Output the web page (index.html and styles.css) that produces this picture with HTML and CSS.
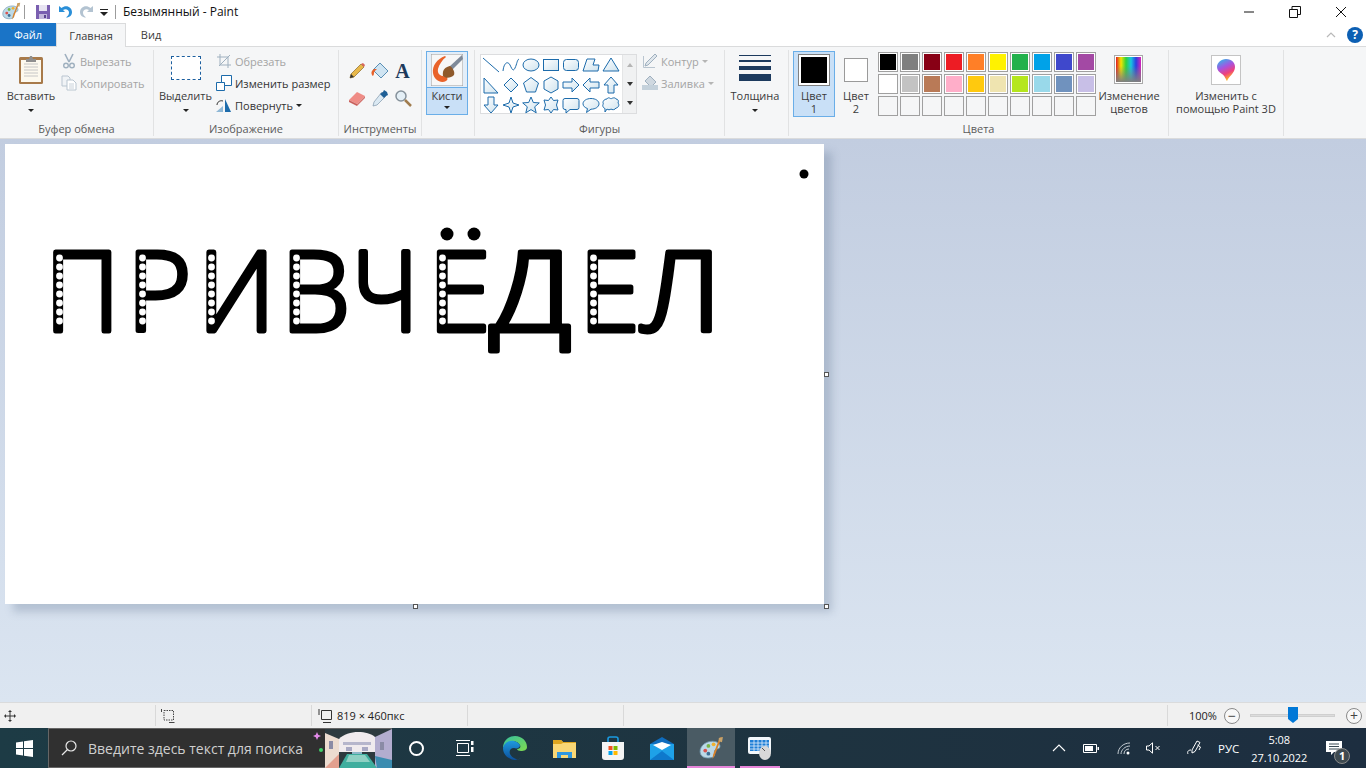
FILE: index.html
```html
<!DOCTYPE html>
<html lang="ru">
<head>
    <meta charset="utf-8">
    <title>Безымянный - Paint</title>
    <link rel="stylesheet" href="styles.css">
</head>
<body>
<svg class="defs" width="0" height="0">
    <defs>
        <linearGradient id="shapeFill" x1="0" y1="0" x2="1" y2="1">
            <stop offset="0" stop-color="#ffffff"/>
            <stop offset="1" stop-color="#cfe3ee"/>
        </linearGradient>
        <linearGradient id="edgeA" x1="0" y1="0" x2="1" y2="1">
            <stop offset="0" stop-color="#35c1a0"/>
            <stop offset="1" stop-color="#7fd94e"/>
        </linearGradient>
        <linearGradient id="edgeB" x1="0" y1="0" x2="0" y2="1">
            <stop offset="0" stop-color="#1e9ade"/>
            <stop offset="1" stop-color="#0c4f9c"/>
        </linearGradient>
        <linearGradient id="rainbow" x1="0" y1="0" x2="1" y2="0">
            <stop offset="0" stop-color="#e01b24"/>
            <stop offset=".2" stop-color="#f5e400"/>
            <stop offset=".4" stop-color="#2fd13a"/>
            <stop offset=".6" stop-color="#16c7e0"/>
            <stop offset=".8" stop-color="#2b3fe0"/>
            <stop offset="1" stop-color="#d822b8"/>
        </linearGradient>
        <linearGradient id="greyFade" x1="0" y1="0" x2="0" y2="1">
            <stop offset=".35" stop-color="#808080" stop-opacity="0"/>
            <stop offset="1" stop-color="#808080"/>
        </linearGradient>
        <linearGradient id="drop3d" x1="0" y1="0" x2="0.4" y2="1">
            <stop offset="0" stop-color="#1fc6ea"/>
            <stop offset=".45" stop-color="#a653e0"/>
            <stop offset=".75" stop-color="#f0407a"/>
            <stop offset="1" stop-color="#fbb02c"/>
        </linearGradient>
        <symbol id="palette" viewBox="0 0 24 24">
            <path d="M1 15c0-6 6-10 12-10 5 0 8 3 7 6-1 2-4 1-5 3s1 4-1 6c-3 2-13 2-13-5z" fill="#bcd9e8" stroke="#6d94ab" stroke-width=".8"/>
            <circle cx="6" cy="14" r="1.8" fill="#d9534f"/>
            <circle cx="9" cy="9.5" r="1.8" fill="#7ab648"/>
            <circle cx="14" cy="8" r="1.8" fill="#f0b030"/>
            <circle cx="9" cy="17" r="1.8" fill="#3f6f96"/>
            <path d="M22 1l-2 5-5 13-2 3 .5-4 5-13 1-3z" fill="#d9822b"/>
            <path d="M19 2l4-1-1 5-3-1z" fill="#c9a36a"/>
        </symbol>
    </defs>
</svg>

<div class="app">
    <header class="titlebar">
        <svg class="app-icon" width="19" height="19"><use href="#palette"/></svg>
        <span class="qat-sep"></span>
        <svg class="qat-icon" width="16" height="16" viewBox="0 0 16 16"><path d="M1 1h14v14H1z" fill="#7a5fb0"/><path d="M4 1h8v6H4z" fill="#e8e4f2"/><path d="M4 10h8v5H4z" fill="#c3b8dc"/><path d="M9 11h2v3H9z" fill="#5a4490"/></svg>
        <svg class="qat-icon" width="16" height="16" viewBox="0 0 16 16"><path d="M2 2v6h6L6 6c3-2 6 0 6 2.500 0 2-1 3.500-3 5 4 0 6-2.500 6-5.500C15 3 9 0 4.500 4z" fill="#2a8fd8"/></svg>
        <svg class="qat-icon" width="16" height="16" viewBox="0 0 16 16"><path d="M14 2v6H8l2-2C7 4 4 6 4 8.500c0 2 1 3.500 3 5-4 0-6-2.500-6-5.500C1 3 7 0 11.500 4z" fill="#b3c3d1"/></svg>
        <svg class="qat-more" width="8" height="8" viewBox="0 0 8 8"><path d="M0 0h8v1H0zM0 3h8L4 7z" fill="#222"/></svg>
        <span class="qat-sep"></span>
        <span class="title-text">Безымянный - Paint</span>
        <div class="win-controls">
            <svg width="12" height="12" viewBox="0 0 12 12"><path d="M1 6h10" stroke="#111"/></svg>
            <svg width="12" height="12" viewBox="0 0 12 12"><path d="M.5 3.500h8v8h-8zM3 3.500V.5h8.500v8H8.500" fill="none" stroke="#111"/></svg>
            <svg width="12" height="12" viewBox="0 0 12 12"><path d="M1 1l10 10M11 1L1 11" stroke="#111"/></svg>
        </div>
    </header>

    <nav class="tabs">
        <span class="tab tab-file">Файл</span>
        <span class="tab tab-home">Главная</span>
        <span class="tab tab-view">Вид</span>
        <div class="tabs-right">
            <svg width="10" height="6" viewBox="0 0 10 6"><path d="M1 5l4-4 4 4" fill="none" stroke="#b9b9b9" stroke-width="1.200"/></svg>
            <span class="help">?</span>
        </div>
    </nav>

    <section class="ribbon">
        <div class="group group-clipboard">
            <div class="group-body">
                <div class="big-btn paste">
                    <svg width="30" height="30" viewBox="0 0 30 30"><rect x="3" y="3" width="24" height="27" rx="1.500" fill="#a87a4a"/><rect x="5" y="6" width="20" height="22" fill="#fdf9ee"/><path d="M8 10h14M8 13h14M8 16h14M8 19h14M8 22h14" stroke="#c6c6c6"/><path d="M10 5h3l1-3h2l1 3h3v3H10z" fill="#8f8f8f"/></svg>
                    <span class="big-label">Вставить</span>
                    <span class="arrow"></span>
                </div>
                <div class="small-list">
                    <div class="small-row off">
                        <svg width="16" height="16" viewBox="0 0 16 16"><path d="M4 1l4 8M12 1L8 9" stroke="#9fb0bf" stroke-width="1.600"/><circle cx="5" cy="12.500" r="2.300" fill="none" stroke="#9fb0bf" stroke-width="1.400"/><circle cx="11" cy="12.500" r="2.300" fill="none" stroke="#9fb0bf" stroke-width="1.400"/></svg>
                        Вырезать
                    </div>
                    <div class="small-row off">
                        <svg width="16" height="16" viewBox="0 0 16 16"><path d="M1 1h6l2 2v8H1z" fill="#f0f3f6" stroke="#b9c5d0"/><path d="M6 5h6l3 3v7H6z" fill="#fff" stroke="#b9c5d0"/><path d="M8 9h5M8 11h5M8 13h5" stroke="#c9d2da"/></svg>
                        Копировать
                    </div>
                </div>
            </div>
            <div class="group-label">Буфер обмена</div>
        </div>

        <div class="group group-image">
            <div class="group-body">
                <div class="big-btn select">
                    <span class="marquee"></span>
                    <span class="big-label">Выделить</span>
                    <span class="arrow"></span>
                </div>
                <div class="small-list">
                    <div class="small-row off">
                        <svg width="16" height="16" viewBox="0 0 16 16"><path d="M1 4h11v11M4 1v11h11M3 13L14 2" fill="none" stroke="#9fb0bf"/></svg>
                        Обрезать
                    </div>
                    <div class="small-row">
                        <svg width="16" height="16" viewBox="0 0 16 16"><path d="M.5 7.500h8v8h-8z" fill="#fff" stroke="#1c6bab"/><path d="M5.500.5h10v10H8.500V7.500h-3z" fill="#fff" stroke="#1c6bab"/></svg>
                        Изменить размер
                    </div>
                    <div class="small-row">
                        <svg width="16" height="16" viewBox="0 0 16 16"><path d="M9 2l6 13H9z" fill="#1c6bab"/><path d="M0 15l7-6v6z" fill="#8fb8d6"/><path d="M1 8c0-3 3-5 6-4" fill="none" stroke="#333"/></svg>
                        Повернуть <span class="arrow inline"></span>
                    </div>
                </div>
            </div>
            <div class="group-label">Изображение</div>
        </div>

        <div class="group group-tools">
            <div class="group-body tools-grid">
                <svg width="18" height="18" viewBox="0 0 18 18"><path d="M2 16l1-4L13 2l3 3L6 15z" fill="#e8b84a" stroke="#8a6a2a" stroke-width=".7"/><path d="M13 2l3 3 1-2-2-2z" fill="#d9675c"/><path d="M2 16l1-4 3 3z" fill="#333"/></svg>
                <svg width="20" height="20" viewBox="0 0 20 20"><path d="M10 2l8 8-7 7-8-8z" fill="#cfe4f2" stroke="#5a8fb5"/><path d="M4 8c-3 2-3 4-2 6s2 0 2-2 2-3 3-4z" fill="#e8622a"/></svg>
                <span class="tool-a">A</span>
                <svg width="18" height="18" viewBox="0 0 18 18"><path d="M1 11l8-8 8 4-8 8z" fill="#ef8c86"/><path d="M1 11l8 4v2l-8-4z" fill="#c9605c"/><path d="M9 15l8-8v2l-8 8z" fill="#d4736e"/></svg>
                <svg width="18" height="18" viewBox="0 0 18 18"><path d="M11 3l4 4-9 9-4 1 1-4z" fill="#dbe9f3" stroke="#7f97aa" stroke-width=".7"/><path d="M9 5l4 4 2-2 2-1-1-3-3-2-1 2z" fill="#1e5f96"/></svg>
                <svg width="18" height="18" viewBox="0 0 18 18"><circle cx="7" cy="7" r="5" fill="#e4eff6" stroke="#85919b" stroke-width="1.500"/><path d="M11 11l6 6" stroke="#a07c4e" stroke-width="2.500"/></svg>
            </div>
            <div class="group-label">Инструменты</div>
        </div>

        <div class="group group-brushes">
            <div class="brush-btn">
                <div class="brush-top">
                    <svg width="32" height="32" viewBox="0 0 32 32"><rect width="32" height="32" fill="#f7f7f7" stroke="#9a9a9a"/><path d="M31 1L18 13l3 3L32 5z" fill="#7f8a99"/><path d="M14 2C6 5 1 12 2 19c1 7 8 11 13 8 2-1 2-3 0-5-5 1-9-2-8-7 1-4 4-9 8-12z" fill="#e9632a"/><path d="M19 12c-5 1-8 4-7 10 3 3 8 2 11-1 1-3-1-7-4-9z" fill="#8f5a2c"/></svg>
                </div>
                <div class="brush-bottom">
                    <span class="big-label">Кисти</span>
                    <span class="arrow"></span>
                </div>
            </div>
        </div>

        <div class="group group-shapes">
            <div class="group-body shapes-body">
                <div class="gallery">
                    <div class="shape-grid">
                        <svg viewBox="0 0 18 18"><path d="M1 2l16 14"/></svg>
                        <svg viewBox="0 0 18 18"><path class="open" d="M1 15C2 6 6 5 8 9s3 7 5 3 2-8 4-9"/></svg>
                        <svg viewBox="0 0 18 18"><ellipse cx="9" cy="9" rx="8" ry="6"/></svg>
                        <svg viewBox="0 0 18 18"><rect x="1.500" y="3.500" width="15" height="11"/></svg>
                        <svg viewBox="0 0 18 18"><rect x="1.500" y="3.500" width="15" height="11" rx="3"/></svg>
                        <svg viewBox="0 0 18 18"><path d="M1 15L5 3h8l-2 6h6l-1 6z"/></svg>
                        <svg viewBox="0 0 18 18"><path d="M9 2l8 13H1z"/></svg>
                        <svg viewBox="0 0 18 18"><path d="M2 2l14 15H2z"/></svg>
                        <svg viewBox="0 0 18 18"><path d="M9 2l7 7-7 7-7-7z"/></svg>
                        <svg viewBox="0 0 18 18"><path d="M9 1.500l7.500 5.500-3 9h-9l-3-9z"/></svg>
                        <svg viewBox="0 0 18 18"><path d="M9 1l7 4v8l-7 4-7-4V5z"/></svg>
                        <svg viewBox="0 0 18 18"><path d="M1 6h9V2l7 7-7 7v-4H1z"/></svg>
                        <svg viewBox="0 0 18 18"><path d="M17 6H8V2L1 9l7 7v-4h9z"/></svg>
                        <svg viewBox="0 0 18 18"><path d="M6 17V9H2l7-8 7 8h-4v8z"/></svg>
                        <svg viewBox="0 0 18 18"><path d="M6 1v8H2l7 8 7-8h-4V1z"/></svg>
                        <svg viewBox="0 0 18 18"><path d="M9 1l2 6 6 2-6 2-2 6-2-6-6-2 6-2z"/></svg>
                        <svg viewBox="0 0 18 18"><path d="M9 1l2.300 5.500 6 .4-4.600 3.900 1.500 6L9 13.600 3.800 16.800l1.500-6L.7 6.900l6-.4z"/></svg>
                        <svg viewBox="0 0 18 18"><path d="M9 1l2.500 3.500L16 4l-1.500 5 1.500 5-4.500-.5L9 17l-2.500-3.500L2 14l1.500-5L2 4l4.500.5z"/></svg>
                        <svg viewBox="0 0 18 18"><path d="M3 2.500h12a2 2 0 0 1 2 2v7a2 2 0 0 1-2 2H8l-4 3.500v-3.500H3a2 2 0 0 1-2-2v-7a2 2 0 0 1 2-2z"/></svg>
                        <svg viewBox="0 0 18 18"><path d="M9 2.500c4.500 0 8 2.300 8 5.300s-3.500 5.400-8 5.400l-4.500 3.300 1-3.900C3 11.700 1 10 1 7.800c0-3 3.500-5.300 8-5.300z"/></svg>
                        <svg viewBox="0 0 18 18"><path d="M5 3c1-2 3-1 4 0 1-1 4-2 5 0 2 0 3 2 2 4 2 2 0 5-2 5-1 2-4 2-5 1-1 1-3 1-4 0l-2 3v-3.500C1 12 0 9 1.500 8 0 6 2 3 5 3z"/></svg>
                    </div>
                    <div class="gallery-scroll">
                        <span class="scroll-btn"><i class="tri up"></i></span>
                        <span class="scroll-btn"><i class="tri down"></i></span>
                        <span class="scroll-btn"><i class="tri more"></i></span>
                    </div>
                </div>
                <div class="small-list outline-list">
                    <div class="small-row off">
                        <svg width="16" height="16" viewBox="0 0 16 16"><path d="M1.500 3v11.500H13" fill="none" stroke="#b9c5d0"/><path d="M3 13l1-3 9-9 2 2-9 9z" fill="#dfe6ec" stroke="#9fb0bf"/></svg>
                        Контур <span class="arrow inline off"></span>
                    </div>
                    <div class="small-row off">
                        <svg width="16" height="16" viewBox="0 0 16 16"><path d="M8 1l6 6-5 5-6-6z" fill="#cfd8e0" stroke="#9fb0bf"/><path d="M0 10h16v5H0z" fill="#c4d1db"/></svg>
                        Заливка <span class="arrow inline off"></span>
                    </div>
                </div>
            </div>
            <div class="group-label">Фигуры</div>
        </div>

        <div class="group group-size">
            <div class="big-btn size-btn">
                <div class="size-lines"><i></i><i></i><i></i><i></i></div>
                <span class="big-label">Толщина</span>
                <span class="arrow"></span>
            </div>
        </div>

        <div class="group group-colors">
            <div class="group-body colors-body">
                <div class="color-btn active">
                    <span class="swatch-big"><i></i></span>
                    <span class="color-text">Цвет<br>1</span>
                </div>
                <div class="color-btn">
                    <span class="swatch-small"><i></i></span>
                    <span class="color-text">Цвет<br>2</span>
                </div>
                <div class="palette">
                    <i style="--c:#000000"></i><i style="--c:#7f7f7f"></i><i style="--c:#880015"></i><i style="--c:#ed1c24"></i><i style="--c:#ff7f27"></i><i style="--c:#fff200"></i><i style="--c:#22b14c"></i><i style="--c:#00a2e8"></i><i style="--c:#3f48cc"></i><i style="--c:#a349a4"></i>
                    <i style="--c:#ffffff"></i><i style="--c:#c3c3c3"></i><i style="--c:#b97a57"></i><i style="--c:#ffaec9"></i><i style="--c:#ffc90e"></i><i style="--c:#efe4b0"></i><i style="--c:#b5e61d"></i><i style="--c:#99d9ea"></i><i style="--c:#7092be"></i><i style="--c:#c8bfe7"></i>
                    <i class="empty"></i><i class="empty"></i><i class="empty"></i><i class="empty"></i><i class="empty"></i><i class="empty"></i><i class="empty"></i><i class="empty"></i><i class="empty"></i><i class="empty"></i>
                </div>
                <div class="big-btn edit-colors">
                    <svg width="30" height="30" viewBox="0 0 30 30"><rect x=".5" y=".5" width="28" height="28" fill="#fff" stroke="#a9a9a9"/><rect x="2" y="2" width="25" height="25" fill="url(#rainbow)"/><rect x="2" y="2" width="25" height="25" fill="url(#greyFade)"/></svg>
                    <span class="color-text">Изменение<br>цветов</span>
                </div>
            </div>
            <div class="group-label">Цвета</div>
        </div>

        <div class="group group-3d">
            <div class="big-btn edit-3d">
                <svg width="30" height="30" viewBox="0 0 30 30"><rect x=".5" y=".5" width="29" height="29" fill="#fff" stroke="#c4c4c4"/><path d="M15 4c6 0 9 4 9 8 0 6-6 9-8 14-1-1-2-5-5-7-3-2-5-4-5-7 0-4 4-8 9-8z" fill="url(#drop3d)"/></svg>
                <span class="color-text">Изменить с<br>помощью Paint 3D</span>
            </div>
        </div>
    </section>

    <main class="workspace">
        <div class="canvas">
            <svg class="drawing" width="819" height="460" viewBox="0 0 819 460">
                <g class="word"><text transform="translate(40 186.500) scale(.95 1)">П</text><text transform="translate(122 186.500) scale(1 1)">Р</text><text transform="translate(193 186.500) scale(.97 1)">И</text><text transform="translate(276 186.500) scale(1 1)">В</text><text transform="translate(347 186.500) scale(.9 1)">Ч</text><text transform="translate(423 186.500) scale(1.03 1)">Ё</text><text transform="translate(485 186.500) scale(1.14 1)">Д</text><text transform="translate(574 186.500) scale(1 1)">Е</text><text transform="translate(636 186.500) scale(1.07 1)">Л</text></g>
                <rect x="425" y="72" width="60" height="30" fill="#fff"/>
                <circle cx="442" cy="90" r="6.500"/>
                <circle cx="469" cy="90" r="6.500"/>
                <g fill="#fff">
                    <circle cx="54.500" cy="114" r="3.400"/><circle cx="54.500" cy="123" r="3.400"/><circle cx="54.500" cy="132" r="3.400"/><circle cx="54.500" cy="141" r="3.400"/><circle cx="54.500" cy="150" r="3.400"/><circle cx="54.500" cy="159" r="3.400"/><circle cx="54.500" cy="168" r="3.400"/><circle cx="54.500" cy="177" r="3.400"/>
                    <circle cx="137.500" cy="114" r="3.400"/><circle cx="137.500" cy="123" r="3.400"/><circle cx="137.500" cy="132" r="3.400"/><circle cx="137.500" cy="141" r="3.400"/><circle cx="137.500" cy="150" r="3.400"/><circle cx="137.500" cy="159" r="3.400"/><circle cx="137.500" cy="168" r="3.400"/><circle cx="137.500" cy="177" r="3.400"/>
                    <circle cx="206.500" cy="114" r="3.400"/><circle cx="206.500" cy="123" r="3.400"/><circle cx="206.500" cy="132" r="3.400"/><circle cx="206.500" cy="141" r="3.400"/><circle cx="206.500" cy="150" r="3.400"/><circle cx="206.500" cy="159" r="3.400"/><circle cx="206.500" cy="168" r="3.400"/><circle cx="206.500" cy="177" r="3.400"/>
                    <circle cx="291.500" cy="114" r="3.400"/><circle cx="291.500" cy="123" r="3.400"/><circle cx="291.500" cy="132" r="3.400"/><circle cx="291.500" cy="141" r="3.400"/><circle cx="291.500" cy="150" r="3.400"/><circle cx="291.500" cy="159" r="3.400"/><circle cx="291.500" cy="168" r="3.400"/><circle cx="291.500" cy="177" r="3.400"/>
                    <circle cx="437.500" cy="114" r="3.400"/><circle cx="437.500" cy="123" r="3.400"/><circle cx="437.500" cy="132" r="3.400"/><circle cx="437.500" cy="141" r="3.400"/><circle cx="437.500" cy="150" r="3.400"/><circle cx="437.500" cy="159" r="3.400"/><circle cx="437.500" cy="168" r="3.400"/><circle cx="437.500" cy="177" r="3.400"/>
                    <circle cx="588.500" cy="114" r="3.400"/><circle cx="588.500" cy="123" r="3.400"/><circle cx="588.500" cy="132" r="3.400"/><circle cx="588.500" cy="141" r="3.400"/><circle cx="588.500" cy="150" r="3.400"/><circle cx="588.500" cy="159" r="3.400"/><circle cx="588.500" cy="168" r="3.400"/><circle cx="588.500" cy="177" r="3.400"/>
                </g>
                <circle cx="799" cy="30" r="4.500"/>
            </svg>
            <span class="handle h-right"></span>
            <span class="handle h-bottom"></span>
            <span class="handle h-corner"></span>
        </div>
    </main>

    <footer class="statusbar">
        <div class="status-cell">
            <svg width="12" height="12" viewBox="0 0 12 12"><path d="M6 0l2 2H6.500v3.500H10V4l2 2-2 2V6.500H6.500V10H8l-2 2-2-2h1.500V6.500H2V8L0 6l2-2v1.500h3.500V2H4z" fill="#333"/></svg>
        </div>
        <div class="status-cell">
            <svg width="14" height="14" viewBox="0 0 14 14"><path d="M3 1.500h9.500V11H3z" fill="none" stroke="#444" stroke-dasharray="1.500 1"/><path d="M.5 3V0M13.500 13.500H8" stroke="#444"/></svg>
        </div>
        <div class="status-cell">
            <svg width="14" height="14" viewBox="0 0 14 14"><path d="M3.500 1.500h10v9h-10z" fill="none" stroke="#333"/><path d="M1 0v6M5 13.500h8" stroke="#333"/></svg>
            <span>819 × 460пкс</span>
        </div>
        <div class="status-cell"></div>
        <div class="status-cell status-wide"></div>
        <div class="zoom-cell">
            <span class="zoom-text">100%</span>
            <span class="zoom-btn">−</span>
            <div class="slider"><i class="thumb"></i></div>
            <span class="zoom-btn">+</span>
        </div>
    </footer>

    <div class="taskbar">
        <div class="start">
            <svg width="17" height="17" viewBox="0 0 17 17"><path d="M0 2.500l7-1v6.500H0zM8 1.300L17 0v8H8zM0 9h7v6.500l-7-1zM8 9h9v8l-9-1.300z" fill="#fff"/></svg>
        </div>
        <div class="search">
            <svg width="16" height="16" viewBox="0 0 16 16"><circle cx="10" cy="6" r="5" fill="none" stroke="#e8e8e8" stroke-width="1.200"/><path d="M6.500 9.500L1 15" stroke="#e8e8e8" stroke-width="1.200"/></svg>
            <span class="search-text">Введите здесь текст для поиска</span>
            <span class="spark spark-pink"></span>
            <span class="spark spark-blue"></span>
            <span class="spark spark-green"></span>
            <svg class="bridge" width="67" height="39" viewBox="0 0 67 39"><rect width="67" height="39" fill="#2d3a3f"/><path d="M0 4L14 10v29H0z" fill="#ecdcd0"/><path d="M67 0L50 8v31h17z" fill="#b3adcf"/><path d="M14 10C22 1 42 1 50 8v15H14z" fill="#f0ebee"/><path d="M18 13h28v3H18z" fill="#b6b6cc"/><path d="M21 18h6v4h-6zM37 18h6v4h-6z" fill="#a9a9c4"/><path d="M27 23h10v2H27z" fill="#8db7c9"/><path d="M14 39l8-14h20l10 14z" fill="#3fae9e"/><path d="M24 26h16l5 7H21z" fill="#8fd0c3"/><path d="M0 39l14-14v14z" fill="#e2a08f"/><path d="M52 39l-2-12 17 4v8z" fill="#3b8cb0"/><path d="M4 12h4v8H4zM55 13h4v8h-4z" fill="#8a8ba5"/></svg>
        </div>
        <div class="task-btn">
            <span class="cortana"></span>
        </div>
        <div class="task-btn">
            <svg width="18" height="16" viewBox="0 0 18 16"><path d="M1.500 3.500h11v9h-11zM0 .5h14M0 15.500h14" fill="none" stroke="#fff"/><path d="M15 1h2.500v4H15zM15 7h2.500v5H15z" fill="#fff"/></svg>
        </div>
        <div class="task-btn pin-first">
            <svg width="24" height="24" viewBox="0 0 24 24"><path d="M12 0c7 0 12 5 12 11 0 3-3 4-6 4-2 0-4-1-4-2 3 0 4-2 3-4C15 5 9 4 5 7 3 8 1 10 0 12 0 5 5 0 12 0z" fill="url(#edgeA)"/><path d="M0 12c1-5 6-8 11-7 4 1 6 3 6 5-1 2-3 3-6 2-4 0-5 3-4 6 1 2 3 4 6 5 2 1 4 0 5-1-3 2-8 3-12 0-4-2-6-6-6-10z" fill="url(#edgeB)"/></svg>
        </div>
        <div class="task-btn">
            <svg width="23" height="19" viewBox="0 0 23 19"><path d="M0 1h8l2 2h13v16H0z" fill="#f9d775"/><path d="M0 1h8l2 2h13v1H10L8 5H0z" fill="#dda520"/><path d="M4 19v-6h15v6h-4v-3H8v3z" fill="#2f97e0"/></svg>
        </div>
        <div class="task-btn">
            <svg width="24" height="24" viewBox="0 0 24 24"><path d="M7 7V3a2 2 0 0 1 2-2h6a2 2 0 0 1 2 2v4" fill="none" stroke="#1a9ae0" stroke-width="1.600"/><path d="M1 6h22v15a3 3 0 0 1-3 3H4a3 3 0 0 1-3-3z" fill="#f4f4f4"/><path d="M7.500 10h4v4h-4z" fill="#f25022"/><path d="M12.500 10h4v4h-4z" fill="#7fba00"/><path d="M7.500 15h4v4h-4z" fill="#00a4ef"/><path d="M12.500 15h4v4h-4z" fill="#ffb900"/></svg>
        </div>
        <div class="task-btn">
            <svg width="24" height="23" viewBox="0 0 24 23"><path d="M0 7L12 0l12 7v2H0z" fill="#0f6cbd"/><path d="M0 7h24v16H0z" fill="#1ea1e8"/><path d="M3 8l9-3 9 3-9 5z" fill="#fff"/><path d="M0 23l12-9 12 9z" fill="#0e79cc"/></svg>
        </div>
        <div class="task-btn running active">
            <svg width="25" height="25"><use href="#palette"/></svg>
        </div>
        <div class="task-btn running">
            <svg width="24" height="23" viewBox="0 0 24 23"><rect width="23" height="17" rx="2" fill="#f2f7fb"/><rect x="2" y="3" width="19" height="11" fill="#1e7fd6"/><path d="M2 6h19M2 9h19M2 12h19M6 3v11M10 3v11M14 3v11M18 3v11" stroke="#e3f0fb" stroke-width=".8"/><ellipse cx="17" cy="16" rx="6" ry="7" fill="#d8d8d8"/><path d="M14 11l3 3" stroke="#555"/></svg>
        </div>
        <div class="tray">
            <svg width="14" height="8" viewBox="0 0 14 8"><path d="M1 7l6-6 6 6" fill="none" stroke="#fff" stroke-width="1.100"/></svg>
            <svg class="t-battery" width="16" height="9" viewBox="0 0 16 9"><path d="M.5.5h13v8H.5z" fill="none" stroke="#fff"/><path d="M2 2h8v5H2z" fill="#fff"/><path d="M14.500 3H16v3h-1.500z" fill="#fff"/></svg>
            <svg class="t-wifi" width="14" height="13" viewBox="0 0 14 13"><path d="M1 12C1 6 6 1 13 1M4 12c0-4 4-8 9-8M7 12c0-3 2-5 5-5" fill="none" stroke="#c4ccd2" stroke-width="1"/><circle cx="11" cy="11" r="1.500" fill="#fff"/></svg>
            <svg class="t-sound" width="15" height="12" viewBox="0 0 15 12"><path d="M.5 4h2.500L6.500 .8v10.400L3 8H.5z" fill="none" stroke="#fff"/><path d="M9.500 4l4 4M13.500 4l-4 4" stroke="#fff"/></svg>
            <svg class="t-pen" width="16" height="16" viewBox="0 0 16 16"><path d="M6 10l5-9 3 1.500-5 9-3 1.500zM11.500 5l3 2-1.500 3M5 10c-3 0-4 2-3 4" fill="none" stroke="#fff"/></svg>
            <span class="t-lang">РУС</span>
            <div class="t-clock"><span>5:08</span><span>27.10.2022</span></div>
            <div class="t-notify">
                <svg width="16" height="15" viewBox="0 0 16 15"><path d="M0 0h16v11H8l-3 3v-3H0z" fill="#fff"/><path d="M3 3h10M3 5.500h10M3 8h10" stroke="#3a4a54"/></svg>
                <span class="t-badge">1</span>
            </div>
        </div>
    </div>
</div>
</body>
</html>
```
FILE: styles.css
```css
* {
    box-sizing: border-box;
}
html, body {
    margin: 0;
    height: 100%;
    overflow: hidden;
}
body {
    font-family: "Open Sans", "Noto Sans", sans-serif;
    font-size: 11px;
    color: #3b3b3b;
}
.defs {
    position: absolute;
}
.app {
    display: flex;
    flex-direction: column;
    width: 1366px;
    height: 768px;
}

/* title bar */
.titlebar {
    display: flex;
    align-items: center;
    height: 23px;
    background: #fff;
    padding-left: 2px;
}
.app-icon {
    margin-right: 3px;
}
.qat-sep {
    width: 1px;
    height: 14px;
    background: #9c9c9c;
}
.qat-icon {
    margin-left: 10px;
    margin-right: -4px;
}
.qat-more {
    margin: 3px 7px 0 9px;
}
.title-text {
    margin-left: 7px;
    font-size: 12px;
    color: #111;
}
.win-controls {
    margin-left: auto;
    display: flex;
    gap: 34px;
    padding-right: 19px;
}

/* tabs */
.tabs {
    display: flex;
    height: 23px;
    background: #fff;
    align-items: flex-end;
}
.tab {
    height: 23px;
    display: flex;
    align-items: center;
    justify-content: center;
}
.tab-file {
    width: 56px;
    background: #1a74c7;
    color: #fff;
}
.tab-home {
    width: 70px;
    background: #f5f6f7;
    border: 1px solid #dadbdc;
    border-bottom: 0;
    margin-bottom: -1px;
    height: 24px;
    position: relative;
    z-index: 1;
}
.tab-view {
    width: 50px;
}
.tabs-right {
    margin-left: auto;
    display: flex;
    align-items: center;
    gap: 11px;
    height: 23px;
    padding-right: 3px;
}
.help {
    width: 16px;
    height: 16px;
    border-radius: 50%;
    background: #0c5fb3;
    color: #fff;
    font-weight: 700;
    font-size: 12px;
    line-height: 16px;
    text-align: center;
}

/* ribbon */
.ribbon {
    display: flex;
    height: 93px;
    background: #f5f6f7;
    border-top: 1px solid #dadbdc;
    border-bottom: 1px solid #dadbdc;
    padding-bottom: 1px;
}
.group {
    display: flex;
    flex-direction: column;
    border-right: 1px solid #e1e2e3;
    margin-top: 3px;
    margin-bottom: 1px;
}
.group-body {
    flex: 1;
    display: flex;
    margin-top: -1px;
}
.group-label {
    height: 14px;
    line-height: 14px;
    text-align: center;
    color: #5c5c5c;
}
.group-clipboard { width: 154px; }
.group-image { width: 185px; }
.group-tools { width: 83px; }
.group-brushes { width: 53px; }
.group-shapes { width: 250px; }
.group-size { width: 64px; }
.group-colors { width: 380px; }
.group-3d { width: 115px; }

.big-btn {
    display: flex;
    flex-direction: column;
    align-items: center;
    text-align: center;
}
.big-label {
    margin-top: 3px;
    line-height: 16px;
    white-space: nowrap;
}
.arrow {
    width: 0;
    height: 0;
    margin-top: 5px;
    border: 3px solid transparent;
    border-top: 3px solid #222;
    border-bottom: 0;
}
.arrow.inline {
    display: inline-block;
    margin: 0 0 2px 1px;
    vertical-align: middle;
}
.arrow.off {
    border-top-color: #b5b5b5;
    margin-left: 3px;
}
.small-list {
    display: flex;
    flex-direction: column;
    padding-top: 1px;
}
.small-row {
    display: flex;
    align-items: center;
    gap: 3px;
    height: 22px;
    white-space: nowrap;
    color: #333;
}
.small-row.off {
    color: #a4a4a4;
}
.small-row .arrow.inline {
    margin-left: 0;
    margin-bottom: 0;
}

.paste {
    width: 46px;
    margin: 5px 7px 0 8px;
}
.paste .big-label {
    margin-top: 4px;
}
.select {
    width: 51px;
    margin: 7px 5px 0 6px;
}
.marquee {
    display: block;
    width: 30px;
    height: 24px;
    margin-bottom: 5px;
    border: 1px dashed #1c5f9f;
    background: #fff;
}
.tools-grid {
    display: grid;
    grid-template-columns: repeat(3, 23px);
    grid-template-rows: 27px 27px;
    justify-items: center;
    align-items: center;
    align-content: start;
    padding: 8px 0 0 6px;
}
.tool-a {
    font-family: "Liberation Serif", serif;
    font-weight: 700;
    font-size: 20px;
    line-height: 20px;
    color: #1d3a5c;
}

/* brushes */
.brush-btn {
    width: 42px;
    height: 64px;
    margin: 1px 0 0 4px;
    border: 1px solid #6aaee8;
    display: flex;
    flex-direction: column;
}
.brush-top {
    height: 36px;
    padding: 2px 0 0 4px;
    background: #e3eef9;
    border-bottom: 1px solid #6aaee8;
}
.brush-bottom {
    flex: 1;
    background: #c9e0f7;
    display: flex;
    flex-direction: column;
    align-items: center;
}
.brush-bottom .big-label {
    margin-top: 0;
}
.brush-bottom .arrow {
    margin-top: 2px;
}

/* shapes */
.shapes-body {
    padding: 5px 0 0 5px;
}
.gallery {
    display: flex;
    height: 60px;
    border: 1px solid #dcdddf;
    background: #fff;
}
.shape-grid {
    display: grid;
    grid-template-columns: repeat(7, 20px);
    grid-template-rows: repeat(3, 20px);
    width: 141px;
    place-items: center;
}
.shape-grid svg {
    width: 18px;
    height: 18px;
    fill: url(#shapeFill);
    stroke: #1c6bab;
    stroke-width: 1;
}
.shape-grid .open {
    fill: none;
}
.gallery-scroll {
    width: 14px;
    display: flex;
    flex-direction: column;
    background: #f0f1f2;
    border-left: 1px solid #e4e5e6;
}
.scroll-btn {
    flex: 1;
    display: flex;
    align-items: center;
    justify-content: center;
}
.tri {
    display: block;
    width: 0;
    height: 0;
    border: 3.500px solid transparent;
}
.tri.up {
    border-bottom: 4px solid #b5b5b5;
    border-top: 0;
}
.tri.down {
    border-top: 4px solid #333;
    border-bottom: 0;
}
.tri.more {
    border-top: 4px solid #333;
    border-bottom: 0;
    box-shadow: 0 -3px 0 -2px #333;
}
.outline-list {
    margin: -4px 0 0 5px;
    padding-top: 0;
}

/* size */
.size-btn {
    width: 60px;
    padding-top: 5px;
}
.size-lines {
    width: 32px;
    display: flex;
    flex-direction: column;
    gap: 4px;
    margin-bottom: 4px;
}
.size-lines i {
    display: block;
    background: #1c3a5e;
    height: 1px;
}
.size-lines i:nth-child(2) { height: 2px; }
.size-lines i:nth-child(3) { height: 4px; }
.size-lines i:nth-child(4) { height: 7px; }

/* colours */
.colors-body {
    padding: 2px 0 0 4px;
}
.color-btn {
    width: 42px;
    height: 66px;
    display: flex;
    flex-direction: column;
    align-items: center;
    border: 1px solid transparent;
}
.color-btn.active {
    background: #c9e0f7;
    border-color: #6aaee8;
}
.color-text {
    line-height: 13px;
    text-align: center;
    white-space: nowrap;
}
.swatch-big {
    display: block;
    width: 32px;
    height: 32px;
    margin: 2px 0 3px;
    padding: 2px;
    border: 1px solid #808080;
    background: #fff;
}
.swatch-big i {
    display: block;
    height: 100%;
    background: #000;
}
.swatch-small {
    display: block;
    width: 24px;
    height: 24px;
    margin: 6px 0 7px;
    padding: 1px;
    border: 1px solid #9a9a9a;
    background: #fff;
}
.palette {
    display: grid;
    grid-template-columns: repeat(10, 20px);
    grid-template-rows: repeat(3, 20px);
    gap: 2px;
    margin-left: 1px;
    margin-top: 1px;
    align-content: start;
}
.palette i {
    display: block;
    border: 1px solid #a0a0a0;
    background: var(--c);
    box-shadow: inset 0 0 0 1px #fff;
}
.palette i.empty {
    background: #f5f6f7;
    box-shadow: none;
}
.edit-colors {
    width: 60px;
    margin-left: 3px;
    margin-top: 4px;
}
.edit-colors svg {
    margin-bottom: 4px;
}
.edit-3d {
    padding-top: 5px;
}
.edit-3d svg {
    margin-bottom: 4px;
}

/* canvas area */
.workspace {
    flex: 1;
    padding: 5px 0 0 5px;
    background: linear-gradient(#c2cde0, #dbe5f1);
    border-bottom: 1px solid #dadbdc;
}
.canvas {
    position: relative;
    width: 819px;
    height: 460px;
    background: #fff;
    box-shadow: 8px 8px 8px rgba(90, 110, 140, 0.28);
}
.drawing {
    display: block;
}
.word {
    font-family: "Open Sans", sans-serif;
    font-size: 110px;
    font-weight: 300;
    fill: #000;
    stroke: #000;
    stroke-width: 5px;
    stroke-linejoin: round;
}
.handle {
    position: absolute;
    width: 5px;
    height: 5px;
    background: #fff;
    border: 1px solid #555;
}
.h-right {
    left: 819px;
    top: 228px;
}
.h-bottom {
    left: 408px;
    top: 460px;
}
.h-corner {
    left: 819px;
    top: 460px;
}

/* status bar */
.statusbar {
    display: flex;
    height: 25px;
    background: #f0f0f0;
    color: #222;
}
.status-cell {
    width: 156px;
    display: flex;
    align-items: center;
    gap: 5px;
    padding-left: 4px;
    margin: 2px 0;
    border-right: 1px solid #d9d9d9;
}
.status-cell:nth-child(2) { padding-left: 5px; }
.status-cell:nth-child(3) { padding-left: 6px; }
.status-wide {
    width: 544px;
}
.zoom-cell {
    flex: 1;
    display: flex;
    align-items: center;
    padding-left: 21px;
}
.zoom-text {
    width: 35px;
}
.zoom-btn {
    width: 16px;
    height: 16px;
    border-radius: 50%;
    border: 1px solid #8a8a8a;
    background: #f8f8f8;
    font-size: 14px;
    line-height: 13px;
    text-align: center;
    color: #444;
}
.slider {
    position: relative;
    width: 85px;
    height: 3px;
    margin: 0 11px 0 10px;
    background: #dcdcdc;
    border: 1px solid #cfcfcf;
}
.thumb {
    position: absolute;
    left: 37px;
    top: -8px;
    width: 10px;
    height: 16px;
    background: #0078d7;
    clip-path: polygon(0 0, 100% 0, 100% 75%, 50% 100%, 0 75%);
}

/* taskbar */
.taskbar {
    display: flex;
    align-items: stretch;
    height: 40px;
    background: linear-gradient(90deg, #1d3b45, #1e3340 60%, #1d2e40);
    color: #fff;
}
.start {
    width: 48px;
    display: flex;
    align-items: center;
    justify-content: center;
}
.search {
    position: relative;
    display: flex;
    align-items: center;
    width: 344px;
    background: #303030;
    border: 1px solid #666;
    border-right: 0;
    padding-left: 12px;
}
.search-text {
    margin-left: 11px;
    font-size: 14px;
    color: #cfcfcf;
    white-space: nowrap;
}
.bridge {
    position: absolute;
    right: 0;
    top: 0;
}
.spark {
    position: absolute;
    border-radius: 50%;
}
.spark-pink {
    left: 264px;
    top: 3px;
    width: 8px;
    height: 8px;
    border-radius: 0;
    background: #e28ae8;
    clip-path: polygon(50% 0, 65% 35%, 100% 50%, 65% 65%, 50% 100%, 35% 65%, 0 50%, 35% 35%);
}
.spark-blue {
    left: 289px;
    top: 2px;
    width: 4px;
    height: 4px;
    background: #5fd0e6;
}
.spark-green {
    left: 270px;
    top: 19px;
    width: 4px;
    height: 4px;
    background: #3fd06a;
}
.task-btn {
    width: 48px;
    margin-right: 1px;
    display: flex;
    align-items: center;
    justify-content: center;
}
.pin-first {
    margin-left: 1px;
}
.cortana {
    width: 15px;
    height: 15px;
    border: 2px solid #fff;
    border-radius: 50%;
}
.running {
    box-shadow: inset 0 -2px 0 #e685d9;
}
.running:not(.active) {
    box-shadow: none;
    background: linear-gradient(#e685d9, #e685d9) center bottom / 40px 2px no-repeat;
}
.active {
    background: #4a5b64;
}
.tray {
    flex: 1;
    display: flex;
    align-items: center;
    padding-left: 267px;
    position: relative;
}
.t-battery { margin-left: 17px; }
.t-wifi { margin-left: 18px; }
.t-sound { margin-left: 15px; }
.t-pen { margin-left: 25px; }
.t-lang {
    margin-left: 16px;
    font-size: 11.500px;
}
.t-clock {
    display: flex;
    flex-direction: column;
    align-items: center;
    margin-left: 10px;
    padding-top: 1px;
    width: 60px;
    font-size: 11px;
    line-height: 18px;
}
.t-notify {
    position: relative;
    margin-left: 17px;
    display: flex;
}
.t-badge {
    position: absolute;
    left: 8px;
    top: 7px;
    width: 16px;
    height: 16px;
    border-radius: 50%;
    background: #3e4a50;
    border: 1px solid #8a8a8a;
    font-size: 11px;
    font-weight: 700;
    line-height: 14px;
    text-align: center;
}
```
